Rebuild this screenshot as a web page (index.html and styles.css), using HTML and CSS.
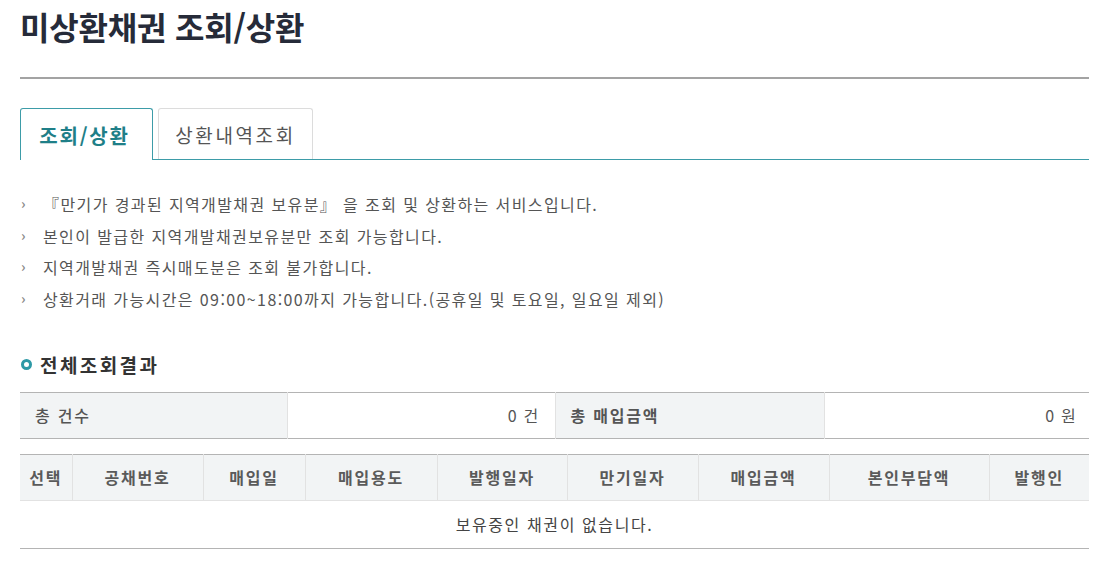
FILE: index.html
```html
<!DOCTYPE html>
<html lang="ko">
<head>
<meta charset="utf-8">
<title>미상환채권 조회/상환</title>
<link rel="stylesheet" href="styles.css">
</head>
<body>
<div class="page">
  <header class="page-header">
    <h1 class="page-title">미상환채권 조회/상환</h1>
  </header>

  <nav class="tabs">
    <a class="tab tab-active">조회/상환</a>
    <a class="tab">상환내역조회</a>
  </nav>

  <ul class="notice">
    <li>『만기가 경과된 지역개발채권 보유분』 을 조회 및 상환하는 서비스입니다.</li>
    <li>본인이 발급한 지역개발채권보유분만 조회 가능합니다.</li>
    <li>지역개발채권 즉시매도분은 조회 불가합니다.</li>
    <li>상환거래 가능시간은 09:00~18:00까지 가능합니다.(공휴일 및 토요일, 일요일 제외)</li>
  </ul>

  <h2 class="section-title"><span class="ring"></span>전체조회결과</h2>

  <table class="summary">
    <colgroup>
      <col class="c-l1"><col class="c-v1"><col class="c-l2"><col>
    </colgroup>
    <tr>
      <th class="lbl">총 건수</th>
      <td class="val">0 건</td>
      <th class="lbl lbl-strong">총 매입금액</th>
      <td class="val val-last">0 원</td>
    </tr>
  </table>

  <table class="grid">
    <colgroup>
      <col class="w52"><col class="w131"><col class="w102"><col class="w132"><col class="w130"><col class="w131"><col class="w131"><col class="w160"><col>
    </colgroup>
    <thead>
      <tr>
        <th>선택</th><th>공채번호</th><th>매입일</th><th>매입용도</th><th>발행일자</th><th>만기일자</th><th>매입금액</th><th>본인부담액</th><th>발행인</th>
      </tr>
    </thead>
    <tbody>
      <tr><td colspan="9" class="empty">보유중인 채권이 없습니다.</td></tr>
    </tbody>
  </table>
</div>
</body>
</html>
```

FILE: styles.css
```css
* { box-sizing: border-box; }

html, body {
  margin: 0;
  padding: 0;
  background: #ffffff;
}

body {
  font-family: "Noto Sans CJK KR", "Noto Sans", "Liberation Sans", sans-serif;
  color: #555555;
}

.page {
  width: 1069px;
  margin-left: 20px;
}

.page-header {
  padding-top: 6px;
  padding-bottom: 30px;
  border-bottom: 2px solid #a3a3a3;
}

.page-title {
  margin: 0;
  font-size: 32px;
  line-height: 41px;
  font-weight: 700;
  letter-spacing: -0.2px;
  color: #262b39;
}

.tabs {
  display: flex;
  align-items: flex-end;
  gap: 5px;
  margin-top: 29px;
  border-bottom: 1px solid #3d9ca8;
  height: 52px;
}

.tab {
  display: flex;
  align-items: center;
  justify-content: center;
  height: 51px;
  width: 155px;
  border: 1px solid #dcdcdc;
  border-bottom: none;
  border-radius: 3px 3px 0 0;
  font-size: 19px;
  letter-spacing: 2.6px;
  color: #555555;
  background: #ffffff;
  padding-top: 1px;
}

.tab-active {
  width: 133px;
  height: 52px;
  margin-bottom: -1px;
  border-color: #3d9ca8;
  color: #1f7f88;
  font-weight: 700;
  font-size: 20px;
  letter-spacing: 1.8px;
  padding-right: 4px;
}

.notice {
  list-style: none;
  margin: 29px 0 0 0;
  padding: 0;
}

.notice li {
  position: relative;
  padding-left: 23px;
  font-size: 16px;
  line-height: 31.7px;
  letter-spacing: 1.4px;
  color: #555555;
}

.notice li::before {
  content: "›";
  position: absolute;
  left: 1px;
  top: -1px;
  font-size: 14px;
  font-weight: 700;
  color: #8a8a8a;
}

.section-title {
  display: flex;
  align-items: center;
  gap: 8px;
  margin: 37px 0 0 0;
  font-size: 19px;
  line-height: 24px;
  font-weight: 700;
  letter-spacing: 2.4px;
  color: #333333;
}

.ring {
  width: 11px;
  height: 11px;
  border: 3px solid #2d99a6;
  border-radius: 50%;
  margin-left: 1px;
}

.summary,
.grid {
  width: 100%;
  border-collapse: collapse;
  table-layout: fixed;
}

.summary {
  margin-top: 15px;
  border-top: 1px solid #b4b4b4;
  border-bottom: 1px solid #b4b4b4;
}

.c-l1 { width: 267px; }
.c-v1 { width: 268px; }
.c-l2 { width: 269px; }

.summary th,
.summary td {
  height: 46px;
  padding: 0 15px;
  font-size: 16px;
  letter-spacing: 1.8px;
  border-left: 1px solid #e2e2e2;
}

.summary tr > :first-child { border-left: none; }

.lbl {
  background: #f2f4f5;
  text-align: left;
  font-weight: 500;
  color: #555555;
}

.lbl-strong { font-weight: 700; }

.val {
  text-align: right;
  color: #555555;
}

.summary td.val { padding-right: 15px; letter-spacing: 1.2px; }
.summary td.val-last { padding-right: 12px; }

.grid {
  margin-top: 15px;
  border-top: 1px solid #b4b4b4;
  border-bottom: 1px solid #b4b4b4;
}

.w52 { width: 52px; }
.w131 { width: 131px; }
.w102 { width: 102px; }
.w132 { width: 132px; }
.w130 { width: 130px; }
.w160 { width: 160px; }

.grid th {
  height: 46px;
  background: #f2f4f5;
  font-size: 16px;
  font-weight: 700;
  letter-spacing: 1.8px;
  color: #5a5a5a;
  border-left: 1px solid #e2e2e2;
  border-bottom: 1px solid #e2e2e2;
  padding: 0;
}

.grid th:first-child { border-left: none; }

.grid td.empty {
  height: 48px;
  text-align: center;
  font-size: 16px;
  letter-spacing: 1.6px;
  color: #444444;
}
```
